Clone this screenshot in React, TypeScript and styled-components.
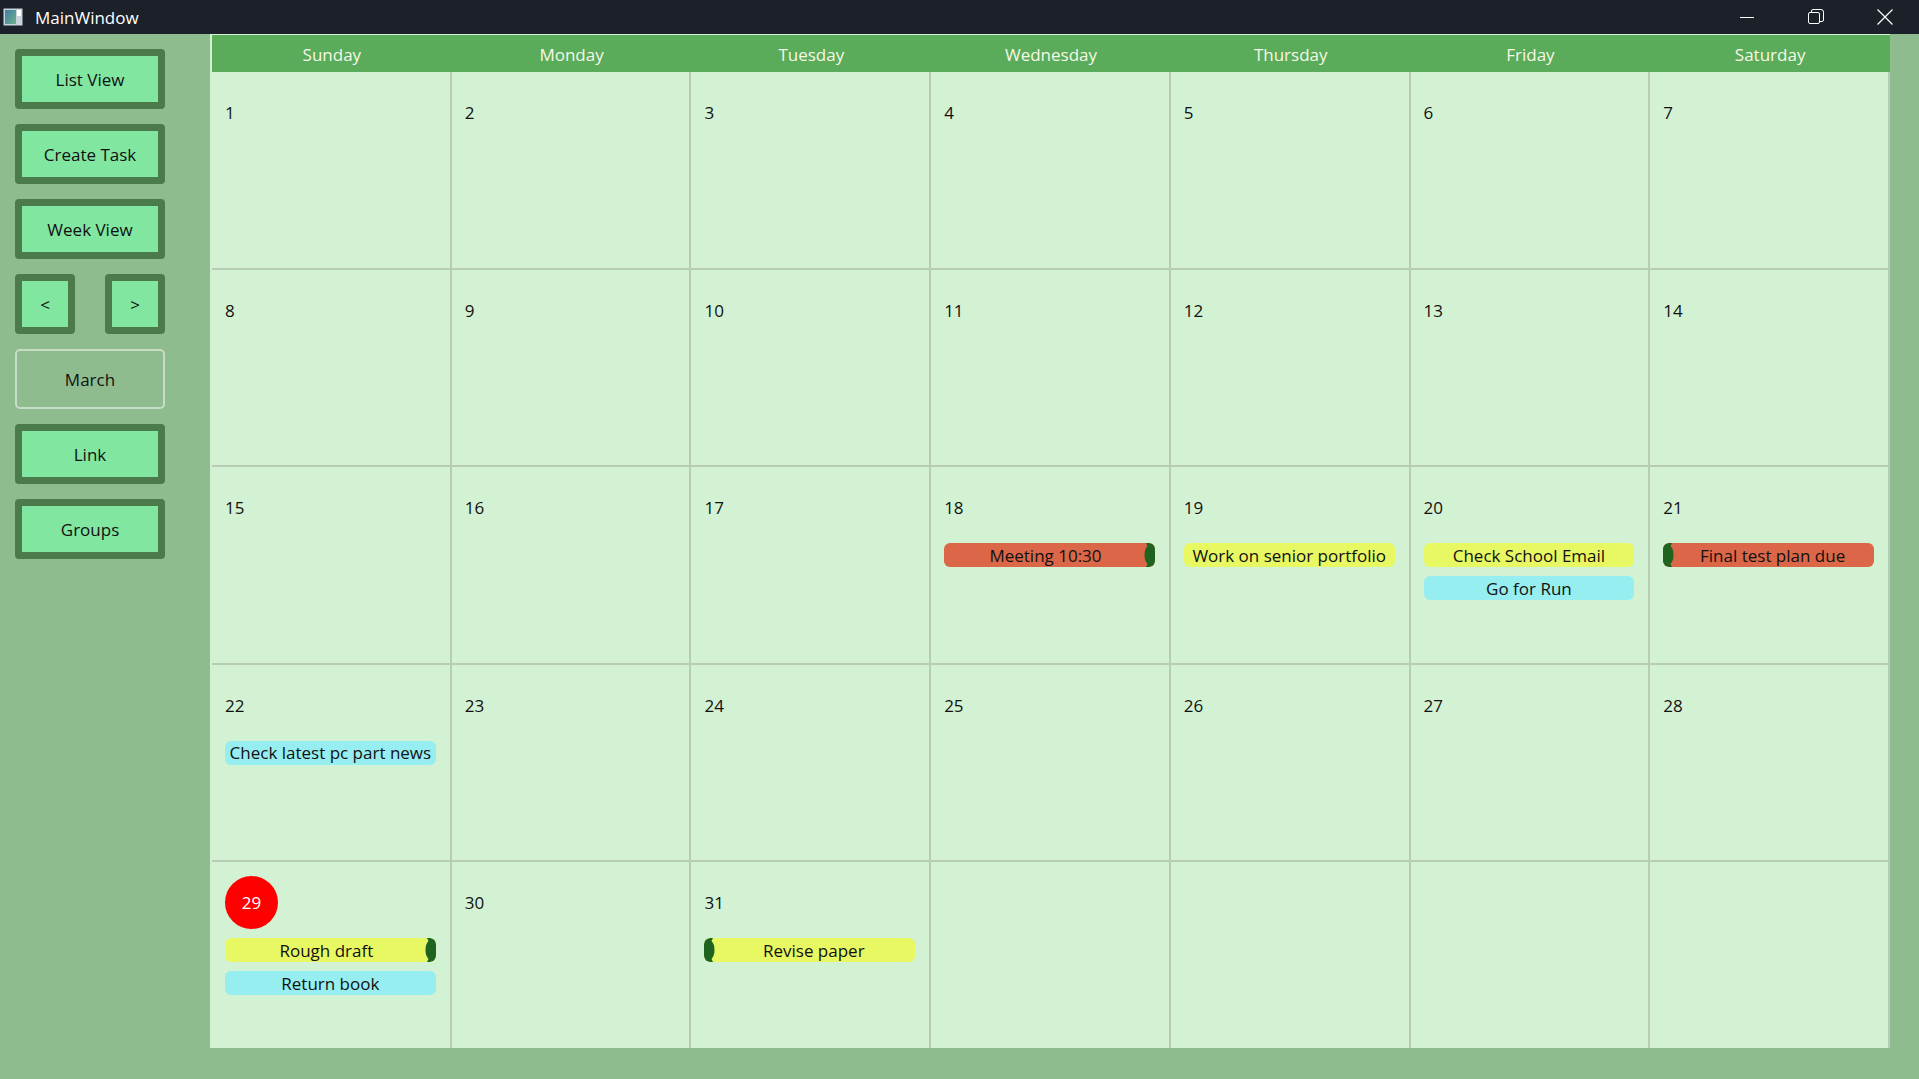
import React from 'react';
import styled, { createGlobalStyle } from 'styled-components';

const GlobalStyle = createGlobalStyle`
  html, body {
    margin: 0;
    padding: 0;
    background: #8fbc8f;
    overflow: hidden;
  }
  * {
    box-sizing: border-box;
  }
`;

const Window = styled.div`
  width: 1919px;
  height: 1079px;
  display: flex;
  flex-direction: column;
  font-family: 'Open Sans', 'Noto Sans', sans-serif;
  background: #8fbc8f;
`;

const TitleBar = styled.div`
  height: 34px;
  flex-shrink: 0;
  display: flex;
  align-items: center;
  background: #1b2029;
  color: #ffffff;
  padding-left: 3px;
`;

const TitleText = styled.span`
  margin-left: 12px;
  font-size: 17px;
`;

const Controls = styled.div`
  margin-left: auto;
  display: flex;
  height: 100%;
`;

const ControlButton = styled.div`
  width: 69px;
  height: 100%;
  display: flex;
  align-items: center;
  justify-content: center;
`;

const Main = styled.div`
  flex: 1;
  display: flex;
  min-height: 0;
`;

const Sidebar = styled.div`
  width: 210px;
  flex-shrink: 0;
  padding: 15px 0 0 15px;
  display: flex;
  flex-direction: column;
  gap: 15px;
`;

const NavButton = styled.button<{ $small?: boolean }>`
  width: ${(p) => (p.$small ? '60px' : '150px')};
  height: 60px;
  border: 7px solid #4b7a4b;
  border-radius: 4px;
  background: #80e6a0;
  font-family: inherit;
  font-size: 17px;
  color: #111;
  padding: 0;
  cursor: pointer;
`;

const MonthLabel = styled.div`
  width: 150px;
  height: 60px;
  border: 2px solid #c9dcc6;
  border-radius: 5px;
  display: flex;
  align-items: center;
  justify-content: center;
  font-size: 17px;
  color: #111;
`;

const ArrowRow = styled.div`
  display: flex;
  gap: 30px;
`;

const Calendar = styled.div`
  width: 1680px;
  height: 1014px;
  background: #d3f1d3;
  padding: 1px 0 0 2px;
  display: flex;
  flex-direction: column;
`;

const HeaderRow = styled.div`
  height: 37px;
  flex-shrink: 0;
  display: grid;
  grid-template-columns: repeat(7, 1fr);
  background: #5aab5a;
`;

const HeaderCell = styled.div`
  display: flex;
  align-items: center;
  justify-content: center;
  padding-top: 2px;
  color: #f6f8e6;
  font-size: 17px;
`;

const Grid = styled.div`
  flex: 1;
  display: grid;
  grid-template-columns: repeat(7, 1fr);
  grid-template-rows: repeat(4, 197.5px) 1fr;
`;

const Cell = styled.div<{ $lastRow: boolean }>`
  border-right: 2px solid #b7cbb5;
  border-bottom: ${(p) => (p.$lastRow ? 'none' : '2px solid #b7cbb5')};
  padding: 14px 14px 0 13px;
  display: flex;
  flex-direction: column;
  gap: 9px;
  min-width: 0;
`;

const DayNumber = styled.div<{ $today: boolean }>`
  height: 53px;
  width: ${(p) => (p.$today ? '53px' : 'auto')};
  display: flex;
  align-items: center;
  justify-content: ${(p) => (p.$today ? 'center' : 'flex-start')};
  border-radius: 50%;
  background: ${(p) => (p.$today ? '#ff0000' : 'transparent')};
  color: ${(p) => (p.$today ? '#ffffff' : '#111')};
  font-size: 17px;
`;

const Events = styled.div`
  display: flex;
  flex-direction: column;
  gap: 9px;
`;

const Pill = styled.div<{ $color: string; $cont?: 'start' | 'end' }>`
  position: relative;
  height: 24px;
  border-radius: 6px;
  background: ${(p) => p.$color};
  display: flex;
  align-items: center;
  justify-content: center;
  padding: ${(p) => (p.$cont === 'end' ? '0 8px 0 0' : p.$cont === 'start' ? '0 0 0 8px' : '0')};
  font-size: 17px;
  color: #111;
  white-space: nowrap;
  overflow: hidden;
`;

const Marker = styled.svg<{ $side: 'start' | 'end' }>`
  position: absolute;
  top: 0;
  ${(p) => (p.$side === 'end' ? 'right: 0;' : 'left: 0; transform: scaleX(-1);')}
`;

type Span = 'start' | 'end';
type CalEvent = { title: string; color: string; cont?: Span };

const RED = '#dc6648';
const YELLOW = '#e8f862';
const CYAN = '#96eef0';

const events: Record<number, CalEvent[]> = {
  18: [{ title: 'Meeting 10:30', color: RED, cont: 'end' }],
  19: [{ title: 'Work on senior portfolio', color: YELLOW }],
  20: [
    { title: 'Check School Email', color: YELLOW },
    { title: 'Go for Run', color: CYAN },
  ],
  21: [{ title: 'Final test plan due', color: RED, cont: 'start' }],
  22: [{ title: 'Check latest pc part news', color: CYAN }],
  29: [
    { title: 'Rough draft', color: YELLOW, cont: 'end' },
    { title: 'Return book', color: CYAN },
  ],
  31: [{ title: 'Revise paper', color: YELLOW, cont: 'start' }],
};

const days = ['Sunday', 'Monday', 'Tuesday', 'Wednesday', 'Thursday', 'Friday', 'Saturday'];
const TODAY = 29;

// dark handle drawn on the edge of a task that carries over into the next/previous day
const ContinueMarker = ({ side }: { side: Span }) => (
  <Marker $side={side} width="12" height="24" viewBox="0 0 12 24">
    <path
      d="M3 0 H6 A6 6 0 0 1 12 6 V18 A6 6 0 0 1 6 24 H3 L4.5 21 Q1.5 18 1.5 12 Q1.5 6 4.5 3 Z"
      fill="#1e6420"
    />
  </Marker>
);

const AppIcon = () => (
  <svg width="20" height="18" viewBox="0 0 20 18">
    <defs>
      <linearGradient id="appIconFill" x1="0" y1="0" x2="1" y2="1">
        <stop offset="0" stopColor="#3d7fa6" />
        <stop offset="1" stopColor="#6fb08a" />
      </linearGradient>
    </defs>
    <rect x="0.5" y="0.5" width="19" height="17" fill="#c8d4dc" />
    <rect x="2" y="2" width="11" height="14" fill="url(#appIconFill)" />
    <rect x="14" y="2" width="4" height="6" fill="#ffffff" />
  </svg>
);

const App = () => {
  const cells: (number | null)[] = [];
  for (let d = 1; d <= 31; d++) cells.push(d);
  while (cells.length < 35) cells.push(null);

  return (
    <>
      <GlobalStyle />
      <Window>
        <TitleBar>
          <AppIcon />
          <TitleText>MainWindow</TitleText>
          <Controls>
            <ControlButton>
              <svg width="14" height="14" viewBox="0 0 14 14">
                <path d="M0 7.5 H14" stroke="#fff" strokeWidth="1" />
              </svg>
            </ControlButton>
            <ControlButton>
              <svg width="16" height="16" viewBox="0 0 16 16">
                <rect x="0.5" y="3.5" width="11" height="11" rx="1.5" fill="none" stroke="#fff" />
                <path d="M3.5 3.5 V2 A1.5 1.5 0 0 1 5 0.5 H13 A2.5 2.5 0 0 1 15.5 3 V11 A1.5 1.5 0 0 1 14 12.5 H11.5" fill="none" stroke="#fff" />
              </svg>
            </ControlButton>
            <ControlButton>
              <svg width="16" height="16" viewBox="0 0 16 16">
                <path d="M0.5 0.5 L15.5 15.5 M15.5 0.5 L0.5 15.5" stroke="#fff" strokeWidth="1.2" />
              </svg>
            </ControlButton>
          </Controls>
        </TitleBar>
        <Main>
          <Sidebar>
            <NavButton>List View</NavButton>
            <NavButton>Create Task</NavButton>
            <NavButton>Week View</NavButton>
            <ArrowRow>
              <NavButton $small>&lt;</NavButton>
              <NavButton $small>&gt;</NavButton>
            </ArrowRow>
            <MonthLabel>March</MonthLabel>
            <NavButton>Link</NavButton>
            <NavButton>Groups</NavButton>
          </Sidebar>
          <Calendar>
            <HeaderRow>
              {days.map((d) => (
                <HeaderCell key={d}>{d}</HeaderCell>
              ))}
            </HeaderRow>
            <Grid>
              {cells.map((day, i) => (
                <Cell key={i} $lastRow={i >= 28}>
                  {day !== null && (
                    <>
                      <DayNumber $today={day === TODAY}>{day}</DayNumber>
                      <Events>
                        {(events[day] || []).map((ev) => (
                          <Pill key={ev.title} $color={ev.color} $cont={ev.cont}>
                            {ev.title}
                            {ev.cont && <ContinueMarker side={ev.cont} />}
                          </Pill>
                        ))}
                      </Events>
                    </>
                  )}
                </Cell>
              ))}
            </Grid>
          </Calendar>
        </Main>
      </Window>
    </>
  );
};

export default App;
